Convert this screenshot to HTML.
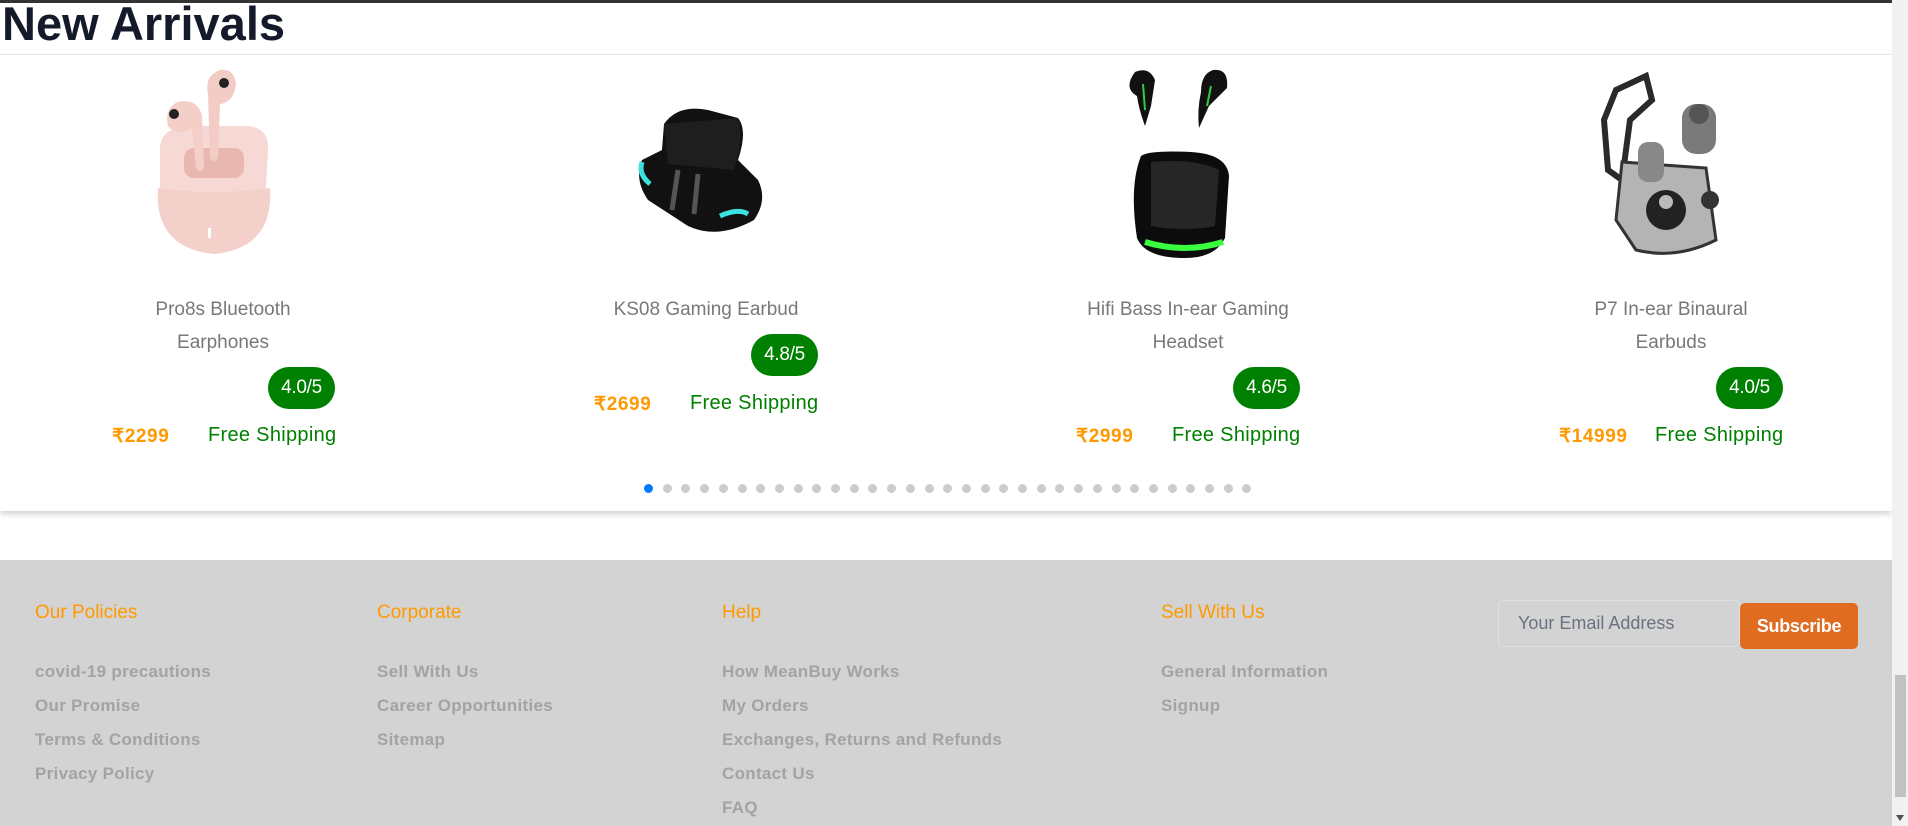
<!DOCTYPE html>
<html><head><meta charset="utf-8"><style>
*{margin:0;padding:0;box-sizing:border-box}
body{width:1908px;height:826px;overflow:hidden;background:#fff;font-family:"Liberation Sans",sans-serif;position:relative}
.a{position:absolute}
.topbar{left:0;top:0;width:1908px;height:3px;background:#333}
h1{position:absolute;left:2px;top:0px;font-size:47px;font-weight:bold;color:#141a2a;letter-spacing:0;line-height:48px}
.hline{left:0;top:54px;width:1892px;height:1px;background:#e6e6e6}
.card{left:0;top:55px;width:1892px;height:456px;background:#fff;box-shadow:0 3px 6px rgba(0,0,0,.18)}
.title{font-size:19px;color:#787878;text-align:center;width:300px;line-height:33px;letter-spacing:0}
.badge{background:#008000;color:#fff;font-size:19px;border-radius:21px;width:67px;height:42px;line-height:42px;text-align:center;letter-spacing:-0.3px}
.price{font-size:19px;font-weight:bold;color:#ff9900;letter-spacing:0.6px}
.ship{font-size:20px;color:#008000;letter-spacing:0.3px}
.dot{width:9px;height:9px;border-radius:50%;background:#ccc;top:484px}
.footer{left:0;top:560px;width:1892px;height:266px;background:#d3d3d3}
.fh{font-size:19px;color:#ff9900;top:602px;letter-spacing:0}
.fl{font-size:17px;font-weight:bold;color:#a3a3a3;letter-spacing:0.3px}
.sb{left:1892px;top:0;width:16px;height:826px;background:#f1f1f1}
.thumb{left:1895px;top:675px;width:11px;height:122px;background:#c1c1c1}
</style></head><body>
<div class="a topbar"></div>
<h1>New Arrivals</h1>
<div class="a card"></div>
<div class="a hline"></div>

<svg class="a" style="left:148px;top:68px" width="132" height="190" viewBox="0 0 132 190">
<path d="M12 84 Q10 60 40 58 L100 58 Q122 60 120 84 L118 118 Q126 180 66 186 Q6 180 12 118 Z" fill="#f6d9d4"/>
<path d="M10 120 Q66 128 122 120 Q126 180 66 186 Q6 180 10 120Z" fill="#f3d0ca"/>
<rect x="36" y="80" width="60" height="30" rx="10" fill="#e8b8b0"/>
<path d="M30 34 Q16 40 20 58 Q30 70 44 60 L48 100 Q52 106 56 100 L54 48 Q50 30 30 34Z" fill="#f4cfc8"/>
<circle cx="26" cy="46" r="5" fill="#222"/>
<path d="M72 2 Q56 8 60 26 L62 90 Q66 96 70 90 L72 36 Q86 34 88 16 Q86 0 72 2Z" fill="#f2ccc5"/>
<circle cx="76" cy="15" r="5" fill="#222"/>
<rect x="60" y="160" width="3" height="10" fill="#fff"/>
</svg>
<div class="a title" style="left:73px;top:293px">Pro8s Bluetooth<br>Earphones</div>
<div class="a badge" style="left:268px;top:367px">4.0/5</div>
<div class="a price" style="left:112px;top:425px">₹2299</div>
<div class="a ship" style="left:208px;top:424px">Free Shipping</div>

<svg class="a" style="left:628px;top:90px" width="160" height="155" viewBox="0 0 160 155">
<path d="M36 34 Q50 14 80 20 L110 28 Q120 40 110 70 L130 90 Q140 110 126 130 Q90 150 60 136 L20 110 Q6 90 14 70 L34 60 Z" fill="#111"/>
<path d="M36 34 L110 28 Q116 50 106 80 L40 74 Z" fill="#1e1e1e"/>
<path d="M14 72 Q10 84 22 94" stroke="#3ee0e0" stroke-width="5" fill="none"/>
<path d="M92 126 Q110 118 120 124" stroke="#3ee0e0" stroke-width="5" fill="none"/>
<path d="M50 80 L44 120 M70 84 L66 124" stroke="#555" stroke-width="5"/>
</svg>
<div class="a title" style="left:556px;top:293px">KS08 Gaming Earbud</div>
<div class="a badge" style="left:751px;top:334px">4.8/5</div>
<div class="a price" style="left:594px;top:393px">₹2699</div>
<div class="a ship" style="left:690px;top:392px">Free Shipping</div>

<svg class="a" style="left:1115px;top:66px" width="140" height="195" viewBox="0 0 140 195">
<path d="M20 6 Q34 0 40 14 L36 40 L30 60 Q24 44 22 30 Q8 22 20 6Z" fill="#111"/>
<path d="M28 18 L30 44" stroke="#2ecc40" stroke-width="2"/>
<path d="M98 4 Q114 2 112 22 Q100 34 94 40 L84 62 Q82 44 86 26 Q86 8 98 4Z" fill="#111"/>
<path d="M96 20 L92 40" stroke="#2ecc40" stroke-width="2"/>
<path d="M26 90 Q34 84 76 86 Q112 88 114 110 L110 172 Q100 192 70 192 Q30 192 22 172 Q14 120 26 90Z" fill="#0c0c0c"/>
<path d="M36 96 Q80 92 104 104 L100 160 Q70 166 36 160Z" fill="#262626"/>
<path d="M30 176 Q70 188 108 176" stroke="#39ff3e" stroke-width="6" fill="none"/>
</svg>
<div class="a title" style="left:1038px;top:293px">Hifi Bass In-ear Gaming<br>Headset</div>
<div class="a badge" style="left:1233px;top:367px">4.6/5</div>
<div class="a price" style="left:1076px;top:425px">₹2999</div>
<div class="a ship" style="left:1172px;top:424px">Free Shipping</div>

<svg class="a" style="left:1586px;top:70px" width="156" height="190" viewBox="0 0 156 190">
<path d="M30 20 L60 6 L66 30 L44 50 L36 110 L22 100 L18 50Z" fill="none" stroke="#2a2a2a" stroke-width="6"/>
<rect x="96" y="34" width="34" height="50" rx="14" fill="#7a7a7a"/>
<circle cx="113" cy="44" r="10" fill="#555"/>
<path d="M36 92 L120 98 L130 170 Q90 190 50 180 L30 150Z" fill="#b4b4b4" stroke="#333" stroke-width="3"/>
<rect x="52" y="72" width="26" height="40" rx="10" fill="#888"/>
<circle cx="80" cy="140" r="20" fill="#222"/>
<circle cx="80" cy="132" r="7" fill="#bbb"/>
<circle cx="124" cy="130" r="9" fill="#333"/>
</svg>
<div class="a title" style="left:1521px;top:293px">P7 In-ear Binaural<br>Earbuds</div>
<div class="a badge" style="left:1716px;top:367px">4.0/5</div>
<div class="a price" style="left:1559px;top:425px">₹14999</div>
<div class="a ship" style="left:1655px;top:424px">Free Shipping</div>

<div class="a dot" style="left:644px;background:#007bff"></div>
<div class="a dot" style="left:662.7px"></div><div class="a dot" style="left:681.4px"></div><div class="a dot" style="left:700.1px"></div><div class="a dot" style="left:718.8px"></div><div class="a dot" style="left:737.5px"></div><div class="a dot" style="left:756.2px"></div><div class="a dot" style="left:774.9px"></div><div class="a dot" style="left:793.6px"></div><div class="a dot" style="left:812.3px"></div><div class="a dot" style="left:831px"></div><div class="a dot" style="left:849.7px"></div><div class="a dot" style="left:868.4px"></div><div class="a dot" style="left:887.1px"></div><div class="a dot" style="left:905.8px"></div><div class="a dot" style="left:924.5px"></div><div class="a dot" style="left:943.2px"></div><div class="a dot" style="left:961.9px"></div><div class="a dot" style="left:980.6px"></div><div class="a dot" style="left:999.3px"></div><div class="a dot" style="left:1018px"></div><div class="a dot" style="left:1036.7px"></div><div class="a dot" style="left:1055.4px"></div><div class="a dot" style="left:1074.1px"></div><div class="a dot" style="left:1092.8px"></div><div class="a dot" style="left:1111.5px"></div><div class="a dot" style="left:1130.2px"></div><div class="a dot" style="left:1148.9px"></div><div class="a dot" style="left:1167.6px"></div><div class="a dot" style="left:1186.3px"></div><div class="a dot" style="left:1205px"></div><div class="a dot" style="left:1223.7px"></div><div class="a dot" style="left:1242.4px"></div>

<div class="a footer"></div>
<div class="a fh" style="left:35px">Our Policies</div>
<div class="a fh" style="left:377px">Corporate</div>
<div class="a fh" style="left:722px">Help</div>
<div class="a fh" style="left:1161px">Sell With Us</div>

<div class="a fl" style="left:35px;top:655px;line-height:34px">covid-19 precautions<br>Our Promise<br>Terms &amp; Conditions<br>Privacy Policy</div>
<div class="a fl" style="left:377px;top:655px;line-height:34px">Sell With Us<br>Career Opportunities<br>Sitemap</div>
<div class="a fl" style="left:722px;top:655px;line-height:34px">How MeanBuy Works<br>My Orders<br>Exchanges, Returns and Refunds<br>Contact Us<br>FAQ</div>
<div class="a fl" style="left:1161px;top:655px;line-height:34px">General Information<br>Signup</div>

<div class="a" style="left:1498px;top:600px;width:242px;height:47px;border:1px solid #dde0e6;border-radius:5px;background:#d3d3d3"></div>
<div class="a" style="left:1518px;top:613px;font-size:18px;color:#6b7280;letter-spacing:0">Your Email Address</div>
<div class="a" style="left:1740px;top:603px;width:118px;height:46px;background:#e06c20;border-radius:5px;color:#fff;font-weight:bold;font-size:18px;text-align:center;line-height:46px;letter-spacing:-0.3px">Subscribe</div>

<div class="a sb"></div>
<div class="a thumb"></div>
<svg class="a" style="left:1895px;top:814px" width="10" height="8"><path d="M1 1 L9 1 L5 7Z" fill="#505050"/></svg>
</body></html>
